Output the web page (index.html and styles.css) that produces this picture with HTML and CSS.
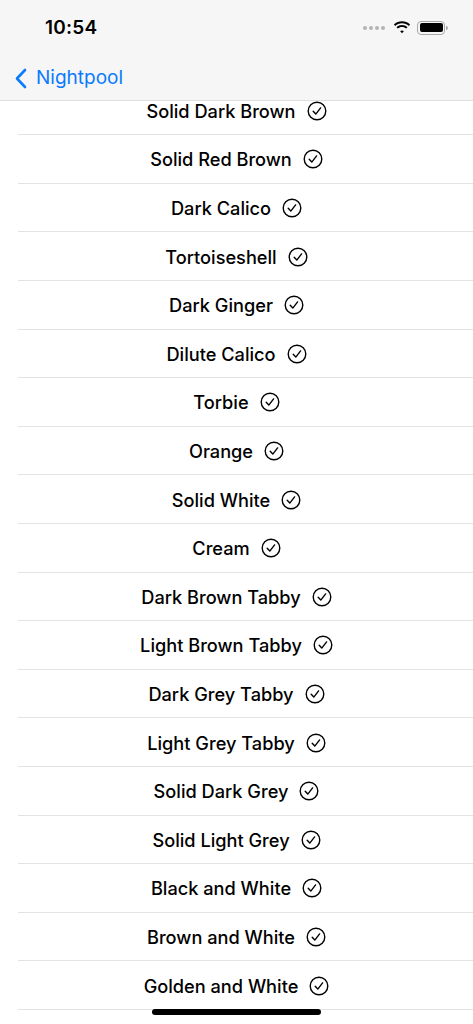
FILE: index.html
```html
<!DOCTYPE html>
<html>
<head>
<meta charset="utf-8">
<link rel="stylesheet" href="styles.css">
</head>
<body>
<header class="topbar">
  <div class="status">
    <span class="time">10:54</span>
    <div class="status-icons">
      <span class="dots"><i></i><i></i><i></i><i></i></span>
      <svg class="wifi" width="18" height="13" viewBox="0 0 18 13">
        <path d="M9 2.2c2.6 0 5 1 6.8 2.7l1.3-1.4C14.9 1.4 12.1.3 9 .3S3.1 1.4.9 3.5l1.3 1.4C4 3.2 6.4 2.2 9 2.2z" fill="#000"/>
        <path d="M9 5.9c1.6 0 3.1.6 4.2 1.7l1.3-1.4C13.1 4.8 11.1 4 9 4S4.9 4.8 3.5 6.2l1.3 1.4C5.9 6.5 7.4 5.9 9 5.9z" fill="#000"/>
        <path d="M9 9.5c.7 0 1.4.3 1.8.8L9 12.3 7.2 10.3c.4-.5 1.1-.8 1.8-.8z" fill="#000"/>
      </svg>
      <span class="battery"><span class="battery-fill"></span></span>
    </div>
  </div>
  <nav class="navbar">
    <a class="back">
      <svg width="13" height="21" viewBox="0 0 13 21"><path d="M11 2L3 10.5 11 19" fill="none" stroke="#0a7aff" stroke-width="2.6" stroke-linecap="round" stroke-linejoin="round"/></svg>
      <span>Nightpool</span>
    </a>
  </nav>
</header>
<main class="list">
  <div class="row"><span>Solid Dark Brown</span><svg class="check" viewBox="0 0 20 20"><circle cx="10" cy="10" r="8.8" fill="none" stroke="#000" stroke-width="1.4"/><path d="M6.2 10.3l2.6 2.8 4.8-6.2" fill="none" stroke="#000" stroke-width="1.4" stroke-linecap="round" stroke-linejoin="round"/></svg></div>
  <div class="row"><span>Solid Red Brown</span><svg class="check" viewBox="0 0 20 20"><circle cx="10" cy="10" r="8.8" fill="none" stroke="#000" stroke-width="1.4"/><path d="M6.2 10.3l2.6 2.8 4.8-6.2" fill="none" stroke="#000" stroke-width="1.4" stroke-linecap="round" stroke-linejoin="round"/></svg></div>
  <div class="row"><span>Dark Calico</span><svg class="check" viewBox="0 0 20 20"><circle cx="10" cy="10" r="8.8" fill="none" stroke="#000" stroke-width="1.4"/><path d="M6.2 10.3l2.6 2.8 4.8-6.2" fill="none" stroke="#000" stroke-width="1.4" stroke-linecap="round" stroke-linejoin="round"/></svg></div>
  <div class="row"><span>Tortoiseshell</span><svg class="check" viewBox="0 0 20 20"><circle cx="10" cy="10" r="8.8" fill="none" stroke="#000" stroke-width="1.4"/><path d="M6.2 10.3l2.6 2.8 4.8-6.2" fill="none" stroke="#000" stroke-width="1.4" stroke-linecap="round" stroke-linejoin="round"/></svg></div>
  <div class="row"><span>Dark Ginger</span><svg class="check" viewBox="0 0 20 20"><circle cx="10" cy="10" r="8.8" fill="none" stroke="#000" stroke-width="1.4"/><path d="M6.2 10.3l2.6 2.8 4.8-6.2" fill="none" stroke="#000" stroke-width="1.4" stroke-linecap="round" stroke-linejoin="round"/></svg></div>
  <div class="row"><span>Dilute Calico</span><svg class="check" viewBox="0 0 20 20"><circle cx="10" cy="10" r="8.8" fill="none" stroke="#000" stroke-width="1.4"/><path d="M6.2 10.3l2.6 2.8 4.8-6.2" fill="none" stroke="#000" stroke-width="1.4" stroke-linecap="round" stroke-linejoin="round"/></svg></div>
  <div class="row"><span>Torbie</span><svg class="check" viewBox="0 0 20 20"><circle cx="10" cy="10" r="8.8" fill="none" stroke="#000" stroke-width="1.4"/><path d="M6.2 10.3l2.6 2.8 4.8-6.2" fill="none" stroke="#000" stroke-width="1.4" stroke-linecap="round" stroke-linejoin="round"/></svg></div>
  <div class="row"><span>Orange</span><svg class="check" viewBox="0 0 20 20"><circle cx="10" cy="10" r="8.8" fill="none" stroke="#000" stroke-width="1.4"/><path d="M6.2 10.3l2.6 2.8 4.8-6.2" fill="none" stroke="#000" stroke-width="1.4" stroke-linecap="round" stroke-linejoin="round"/></svg></div>
  <div class="row"><span>Solid White</span><svg class="check" viewBox="0 0 20 20"><circle cx="10" cy="10" r="8.8" fill="none" stroke="#000" stroke-width="1.4"/><path d="M6.2 10.3l2.6 2.8 4.8-6.2" fill="none" stroke="#000" stroke-width="1.4" stroke-linecap="round" stroke-linejoin="round"/></svg></div>
  <div class="row"><span>Cream</span><svg class="check" viewBox="0 0 20 20"><circle cx="10" cy="10" r="8.8" fill="none" stroke="#000" stroke-width="1.4"/><path d="M6.2 10.3l2.6 2.8 4.8-6.2" fill="none" stroke="#000" stroke-width="1.4" stroke-linecap="round" stroke-linejoin="round"/></svg></div>
  <div class="row"><span>Dark Brown Tabby</span><svg class="check" viewBox="0 0 20 20"><circle cx="10" cy="10" r="8.8" fill="none" stroke="#000" stroke-width="1.4"/><path d="M6.2 10.3l2.6 2.8 4.8-6.2" fill="none" stroke="#000" stroke-width="1.4" stroke-linecap="round" stroke-linejoin="round"/></svg></div>
  <div class="row"><span>Light Brown Tabby</span><svg class="check" viewBox="0 0 20 20"><circle cx="10" cy="10" r="8.8" fill="none" stroke="#000" stroke-width="1.4"/><path d="M6.2 10.3l2.6 2.8 4.8-6.2" fill="none" stroke="#000" stroke-width="1.4" stroke-linecap="round" stroke-linejoin="round"/></svg></div>
  <div class="row"><span>Dark Grey Tabby</span><svg class="check" viewBox="0 0 20 20"><circle cx="10" cy="10" r="8.8" fill="none" stroke="#000" stroke-width="1.4"/><path d="M6.2 10.3l2.6 2.8 4.8-6.2" fill="none" stroke="#000" stroke-width="1.4" stroke-linecap="round" stroke-linejoin="round"/></svg></div>
  <div class="row"><span>Light Grey Tabby</span><svg class="check" viewBox="0 0 20 20"><circle cx="10" cy="10" r="8.8" fill="none" stroke="#000" stroke-width="1.4"/><path d="M6.2 10.3l2.6 2.8 4.8-6.2" fill="none" stroke="#000" stroke-width="1.4" stroke-linecap="round" stroke-linejoin="round"/></svg></div>
  <div class="row"><span>Solid Dark Grey</span><svg class="check" viewBox="0 0 20 20"><circle cx="10" cy="10" r="8.8" fill="none" stroke="#000" stroke-width="1.4"/><path d="M6.2 10.3l2.6 2.8 4.8-6.2" fill="none" stroke="#000" stroke-width="1.4" stroke-linecap="round" stroke-linejoin="round"/></svg></div>
  <div class="row"><span>Solid Light Grey</span><svg class="check" viewBox="0 0 20 20"><circle cx="10" cy="10" r="8.8" fill="none" stroke="#000" stroke-width="1.4"/><path d="M6.2 10.3l2.6 2.8 4.8-6.2" fill="none" stroke="#000" stroke-width="1.4" stroke-linecap="round" stroke-linejoin="round"/></svg></div>
  <div class="row"><span>Black and White</span><svg class="check" viewBox="0 0 20 20"><circle cx="10" cy="10" r="8.8" fill="none" stroke="#000" stroke-width="1.4"/><path d="M6.2 10.3l2.6 2.8 4.8-6.2" fill="none" stroke="#000" stroke-width="1.4" stroke-linecap="round" stroke-linejoin="round"/></svg></div>
  <div class="row"><span>Brown and White</span><svg class="check" viewBox="0 0 20 20"><circle cx="10" cy="10" r="8.8" fill="none" stroke="#000" stroke-width="1.4"/><path d="M6.2 10.3l2.6 2.8 4.8-6.2" fill="none" stroke="#000" stroke-width="1.4" stroke-linecap="round" stroke-linejoin="round"/></svg></div>
  <div class="row"><span>Golden and White</span><svg class="check" viewBox="0 0 20 20"><circle cx="10" cy="10" r="8.8" fill="none" stroke="#000" stroke-width="1.4"/><path d="M6.2 10.3l2.6 2.8 4.8-6.2" fill="none" stroke="#000" stroke-width="1.4" stroke-linecap="round" stroke-linejoin="round"/></svg></div>
</main>
<div class="home-indicator"></div>
</body>
</html>
```

FILE: styles.css
```css
* { box-sizing: border-box; }
html, body {
  margin: 0;
  padding: 0;
  background: #fff;
  height: 1024px;
  overflow: hidden;
  font-family: Inter, "Liberation Sans", sans-serif;
  color: #000;
}
.topbar {
  position: fixed;
  top: 0;
  left: 0;
  right: 0;
  height: 101px;
  background: #f6f6f6;
  border-bottom: 1px solid #dedede;
  z-index: 5;
}
.status {
  height: 55px;
  display: flex;
  align-items: center;
  justify-content: space-between;
  padding: 0 28px 0 45px;
}
.time {
  font-size: 19px;
  font-weight: 600;
  letter-spacing: 0.2px;
  margin-top: -1px;
}
.status-icons {
  display: flex;
  align-items: center;
  gap: 6px;
}
.dots {
  display: flex;
  gap: 2px;
  margin-right: 2px;
}
.dots i {
  width: 4px;
  height: 4px;
  border-radius: 50%;
  background: #b4b4b4;
  display: block;
}
.battery {
  position: relative;
  width: 28px;
  height: 14px;
  border: 1.3px solid #a8a8a8;
  border-radius: 4px;
  padding: 1.5px;
  display: block;
}
.battery::after {
  content: "";
  position: absolute;
  right: -4px;
  top: 4px;
  width: 2px;
  height: 4px;
  border-radius: 0 2px 2px 0;
  background: #a8a8a8;
}
.battery-fill {
  display: block;
  width: 100%;
  height: 100%;
  background: #000;
  border-radius: 2px;
}
.navbar {
  height: 45px;
  display: flex;
  align-items: center;
  padding-left: 14px;
}
.back {
  display: flex;
  align-items: center;
  gap: 9px;
  color: #0a7aff;
  font-size: 19px;
}
.back svg { margin-top: 1px; }
.list {
  padding-top: 86.6px;
}
.row {
  height: 48.6px;
  margin-left: 18px;
  border-bottom: 1px solid #e3e3e3;
  display: flex;
  align-items: center;
  justify-content: center;
  gap: 11px;
  padding-right: 18px;
  padding-top: 1px;
  font-size: 18.2px;
  font-weight: 500;
}
.check {
  width: 20px;
  height: 20px;
  flex: none;
}
.home-indicator {
  position: fixed;
  bottom: 9px;
  left: 152px;
  width: 169px;
  height: 6px;
  border-radius: 3px;
  background: #000;
}
```
